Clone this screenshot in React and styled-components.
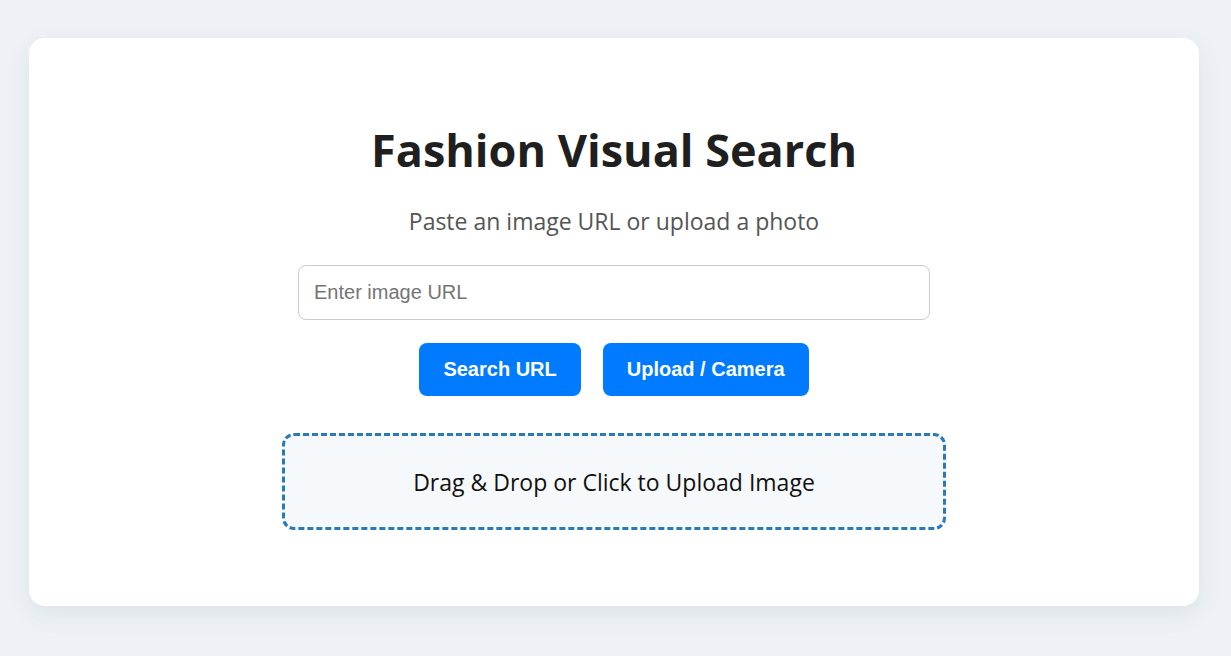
import React, { useState } from 'react'
import styled, { createGlobalStyle } from 'styled-components'

const GlobalStyle = createGlobalStyle`
  body {
    margin: 0;
    background: #eef2f6;
    font-family: 'Open Sans', 'Noto Sans', sans-serif;
  }
`;

function App() {
  const [url, setUrl] = useState('');

  return (
    <Page>
      <GlobalStyle />
      <Card>
        <Title>Fashion Visual Search</Title>
        <Subtitle>Paste an image URL or upload a photo</Subtitle>
        <UrlInput
          type="text"
          placeholder="Enter image URL"
          value={url}
          onChange={(e) => setUrl(e.target.value)}
        />
        <ButtonRow>
          <ActionButton>Search URL</ActionButton>
          <ActionButton>Upload / Camera</ActionButton>
        </ButtonRow>
        <DropZone>Drag &amp; Drop or Click to Upload Image</DropZone>
      </Card>
    </Page>
  )
}

const Page = styled.div`
  min-height: 100vh;
  box-sizing: border-box;
  padding: 38px 32px 50px 29px;
`;

const Card = styled.div`
  background: #fff;
  border-radius: 16px;
  box-shadow: 0 8px 24px rgba(30, 50, 80, 0.08);
  height: 568px;
  box-sizing: border-box;
  padding-top: 80px;
  display: flex;
  flex-direction: column;
  align-items: center;
`;

const Title = styled.h1`
  margin: 0;
  font-size: 45px;
  font-weight: 700;
  color: #1f1f1f;
  line-height: 64px;
`;

const Subtitle = styled.p`
  margin: 24px 0 0;
  font-size: 23px;
  color: #555;
  line-height: 30px;
`;

const UrlInput = styled.input`
  margin-top: 29px;
  width: 632px;
  height: 55px;
  box-sizing: border-box;
  border: 1px solid #ccc;
  border-radius: 8px;
  padding: 0 15px;
  font-family: 'Liberation Sans', Arial, sans-serif;
  font-size: 20px;
  outline: none;
  &::placeholder { color: #757575; }
`;

const ButtonRow = styled.div`
  display: flex;
  gap: 22px;
  margin-top: 23px;
`;

const ActionButton = styled.button`
  height: 53px;
  padding: 0 24px;
  border: none;
  border-radius: 8px;
  background: #007bff;
  color: #fff;
  font-family: 'Liberation Sans', Arial, sans-serif;
  font-size: 20px;
  font-weight: 700;
  cursor: pointer;
`;

const DropZone = styled.div`
  margin-top: 37px;
  width: 664px;
  height: 97px;
  box-sizing: border-box;
  border: 3px dashed #2a7ab8;
  border-radius: 12px;
  background: #f6f9fb;
  display: flex;
  align-items: center;
  justify-content: center;
  font-size: 23px;
  color: #111;
  cursor: pointer;
`;

export default App
